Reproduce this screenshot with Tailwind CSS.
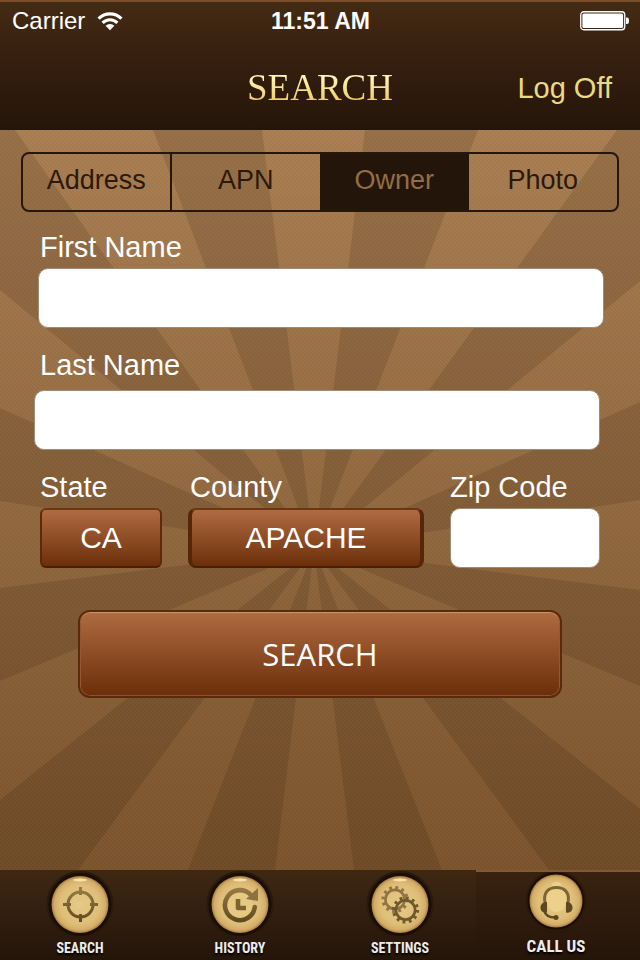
<!DOCTYPE html>
<html lang="en">
<head>
    <meta charset="UTF-8">
    <meta name="viewport" content="width=device-width, initial-scale=1.0">
    <title>Search</title>
    <script src="https://cdn.jsdelivr.net/npm/@tailwindcss/browser@4"></script>
</head>
<body class="min-h-screen flex flex-col bg-[#24150a] font-['Liberation_Sans',Arial,sans-serif] text-white">

    <header class="border-t-2 border-[#7a4e28] bg-linear-to-b from-[#432b14] via-[#38200f] via-40% to-[#24150a]">
        <!-- Status bar -->
        <div class="grid grid-cols-3 items-center h-[38px] pl-3 pr-[11px]">
            <div class="flex items-center gap-3 text-[24px] leading-7">
                <span>Carrier</span>
                <svg class="w-[26px] h-[20px]" viewBox="0 0 26 20" fill="none" stroke="#fff" stroke-width="3.2">
                    <path d="M1.6 7.6a16.2 16.2 0 0 1 22.8 0"/>
                    <path d="M5.6 11.8a10.5 10.5 0 0 1 14.8 0"/>
                    <path d="M13 19.2L8.6 14.8a6.2 6.2 0 0 1 8.8 0z" fill="#fff" stroke="none"/>
                </svg>
            </div>
            <div class="text-center text-[23px] leading-7 font-bold whitespace-nowrap">11:51 AM</div>
            <svg class="justify-self-end w-[49px] h-[20px]" viewBox="0 0 49 20">
                <rect x=".75" y=".75" width="44" height="18" rx="3" fill="none" stroke="#fff" stroke-width="1.3"/>
                <rect x="2.4" y="2.4" width="40.7" height="14.7" rx="1.5" fill="#fff"/>
                <path d="M46 6.500h1q2 0 2 3.300t-2 3.300h-1z" fill="#fff"/>
            </svg>
        </div>
        <!-- Title bar -->
        <div class="grid grid-cols-[1fr_auto_1fr] items-center h-[90px] pt-[6px] px-7">
            <span></span>
            <h1 class="font-['Liberation_Serif',serif] text-[37px] leading-10 text-transparent bg-clip-text bg-linear-to-b from-[#fff3b8] from-25% to-[#f0cf60] to-80%">SEARCH</h1>
            <a href="#logoff" class="justify-self-end text-[29px] leading-8 text-[#eadb83]">Log Off</a>
        </div>
    </header>

    <main class="relative isolate flex-1 bg-linear-to-b from-[#a97e52] via-[#8d653c] via-60% to-[#7c542d]">
        <!-- Sunburst -->
        <svg class="absolute inset-0 -z-10 w-full h-full" viewBox="0 0 640 740" preserveAspectRatio="none">
            <defs>
                <pattern id="weave" width="4" height="4" patternUnits="userSpaceOnUse">
                    <path d="M0 0h1v1h-1zM1 1h1v1h-1zM2 2h1v1h-1zM3 3h1v1h-1z" fill="#000" fill-opacity=".03"/>
                    <path d="M2 0h1v1h-1zM3 1h1v1h-1zM0 2h1v1h-1zM1 3h1v1h-1z" fill="#fff" fill-opacity=".02"/>
                </pattern>
            </defs>
            <g fill="#1e1000" fill-opacity=".13">
                <path d="M314 419L153 0H262z"/>
                <path d="M314 419L365 0H478z"/>
                <path d="M314 419L617 0H640V151z"/>
                <path d="M314 419L640 272V370z"/>
                <path d="M314 419L640 460V556z"/>
                <path d="M314 419L640 679V740H549z"/>
                <path d="M314 419L442 740H354z"/>
                <path d="M314 419L275 740H188z"/>
                <path d="M314 419L78 740H0V670z"/>
                <path d="M314 419L0 551V458z"/>
                <path d="M314 419L0 371V278z"/>
                <path d="M314 419L0 160V0H15z"/>
            </g>
            <rect width="640" height="740" fill="url(#weave)"/>
        </svg>

        <div role="group" aria-label="Search by" class="grid grid-cols-4 h-[60px] mt-[22px] mx-[21px] border-2 border-[#27160a] rounded-lg overflow-hidden text-[27px] leading-8 text-[#2d190a]">
            <button type="button" class="pb-1 border-r-2 border-[#27160a]">Address</button>
            <button type="button" class="pb-1">APN</button>
            <button type="button" aria-pressed="true" class="pb-1 bg-[#24150a] text-[#936d46]">Owner</button>
            <button type="button" class="pb-1">Photo</button>
        </div>

        <form class="text-[29px] leading-8">
            <div class="mt-[19px]">
                <label for="first" class="block px-10">First Name</label>
                <div class="flex mt-[5px] pl-[38px] pr-9">
                    <input id="first" type="text" class="w-full h-[60px] px-4 rounded-[10px] bg-white border border-[#a08c78] text-black">
                </div>
            </div>
            <div class="mt-[21px]">
                <label for="last" class="block px-10">Last Name</label>
                <div class="flex mt-[9px] pl-[34px] pr-10">
                    <input id="last" type="text" class="w-full h-[60px] px-4 rounded-[10px] bg-white border border-[#a08c78] text-black">
                </div>
            </div>
            <div class="flex gap-[26px] mt-[21px] px-10">
                <div class="w-[122px]">
                    <label for="state" class="block">State</label>
                    <select id="state" class="block appearance-none mt-[5px] w-full h-[60px] rounded-md border-2 border-t-[#6e3512] border-x-[#5c2a0b] border-b-[#4a1f05] bg-linear-to-b from-[#b06c40] to-[#6c2f09] text-[30px] text-center [text-align-last:center]">
                        <option>CA</option>
                    </select>
                </div>
                <div class="flex-1">
                    <label for="county" class="block pl-[2px]">County</label>
                    <select id="county" class="block appearance-none mt-[5px] w-full h-[60px] rounded-lg border-y-2 border-x-4 border-t-[#6e3512] border-x-[#552608] border-b-[#4a1f05] bg-linear-to-b from-[#b06c40] to-[#6c2f09] text-[30px] text-center [text-align-last:center]">
                        <option>APACHE</option>
                    </select>
                </div>
                <div class="w-[150px]">
                    <label for="zip" class="block">Zip Code</label>
                    <input id="zip" type="text" class="block mt-[5px] w-full h-[60px] px-4 rounded-[10px] bg-white border border-[#a08c78] text-black">
                </div>
            </div>
            <div class="flex mt-[42px] mb-10 px-[78px]">
                <button type="submit" class="w-full h-[88px] rounded-xl border-2 border-[#5a2a0c] bg-linear-to-b from-[#b06c40] to-[#6b2e08] shadow-[inset_0_1px_1px_#d09a74,inset_0_0_0_1px_#8c5230] font-['Open_Sans',sans-serif] text-[31px]">SEARCH</button>
            </div>
        </form>
    </main>

    <!-- Tab bar -->
    <nav class="grid grid-cols-4 h-[90px] bg-linear-to-b from-[#3f2813] to-[#24150a] font-['Liberation_Sans_Narrow','Roboto_Condensed',Roboto,sans-serif] font-bold text-[14px] leading-5 text-[#ececec] [text-shadow:0_2px_2px_#000]">
        <svg class="absolute w-0 h-0">
            <defs>
                <radialGradient id="gold">
                    <stop offset="0" stop-color="#e6c988"/>
                    <stop offset=".7" stop-color="#dfbe78"/>
                    <stop offset=".9" stop-color="#d3ad69"/>
                    <stop offset="1" stop-color="#a67c40"/>
                </radialGradient>
                <linearGradient id="ink" x1="0" y1="0" x2="0" y2="70" gradientUnits="userSpaceOnUse">
                    <stop offset=".2" stop-color="#a08048"/>
                    <stop offset=".75" stop-color="#5d4920"/>
                </linearGradient>
                <g id="coin">
                    <circle cx="35" cy="34.5" r="32.5" fill="#1a0e06" stroke="#2b190b" stroke-width="2"/>
                    <circle cx="35" cy="34.5" r="28.5" fill="url(#gold)"/>
                    <ellipse cx="35" cy="10" rx="7" ry="1.5" fill="#f8e3ae"/>
                </g>
                <g id="gear" fill="none">
                    <circle r="9.6" stroke-width="2.6"/>
                    <circle r="12" stroke-width="3.2" stroke-dasharray="2.8 3.4832"/>
                </g>
            </defs>
        </svg>
        <a href="#search" class="flex flex-col items-center">
            <svg class="w-[70px] h-[70px] shrink-0" viewBox="0 0 70 70">
                <use href="#coin"/>
                <g fill="none" stroke="url(#ink)" stroke-width="3">
                    <circle cx="35.5" cy="34.5" r="12.5"/>
                    <path d="M35 18h1v6h-1zM35 45h1v6h-1zM19 34h6v1h-6zM46 34h6v1h-6z" stroke-width="2"/>
                </g>
            </svg>
            <span class="-mt-[2px]">SEARCH</span>
        </a>
        <a href="#history" class="flex flex-col items-center">
            <svg class="w-[70px] h-[70px] shrink-0" viewBox="0 0 70 70">
                <use href="#coin"/>
                <circle cx="35" cy="35" r="12.5" fill="#e8c984"/>
                <path d="M49.8 37A15 15 0 1 1 46 25" fill="none" stroke="url(#ink)" stroke-width="4.6" stroke-linecap="round"/>
                <path d="M53 18v13l-12-2z" fill="#8d7140"/>
                <path d="M33 29v9h8" fill="none" stroke="#7d6332" stroke-width="4.6" stroke-linejoin="round"/>
            </svg>
            <span class="-mt-[2px]">HISTORY</span>
        </a>
        <a href="#settings" class="flex flex-col items-center">
            <svg class="w-[70px] h-[70px] shrink-0" viewBox="0 0 70 70">
                <use href="#coin"/>
                <use href="#gear" transform="translate(30 29.5)" stroke="#8f7542"/>
                <use href="#gear" transform="translate(40.5 40)" stroke="#6f582b"/>
            </svg>
            <span class="-mt-[2px]">SETTINGS</span>
        </a>
        <a href="#call" class="flex flex-col items-center -ml-1 pr-1 border-t-2 border-[#84592f] bg-linear-to-b from-[#39220f] to-[#24150a] text-[17px]">
            <svg class="w-[70px] h-[64px] shrink-0" viewBox="0 2 70 64">
                <circle cx="35" cy="31" r="29.5" fill="#1a0e06" stroke="#2b190b" stroke-width="2"/>
                <circle cx="35" cy="31" r="26.5" fill="url(#gold)"/>
                <path d="M35.5 12c3 0 5 1.5 5 4 4 2 5 8 5 13 0 6-3 13-10 13s-10-7-10-13c0-5 1-11 5-13 0-2.5 2-4 5-4z" fill="#ecd08c"/>
                <path d="M24 33C22 23 27 17.5 35.5 17.5S49 23 47 33" fill="none" stroke="#7d6535" stroke-width="3"/>
                <path d="M23 40c1 5 5 7.5 11.5 7.5" fill="none" stroke="#5d4822" stroke-width="2.4"/>
                <g fill="#5d4822">
                    <path d="M26 32v10.5c-4 1-6.5-1.5-6.5-5s3-6 6.5-5.5z"/>
                    <path d="M45 32v10.5c4 1 6.500-1.5 6.500-5s-3-6-6.500-5.500z"/>
                    <circle cx="35" cy="47.5" r="2.5"/>
                </g>
            </svg>
            <span>CALL US</span>
        </a>
    </nav>

</body>
</html>
